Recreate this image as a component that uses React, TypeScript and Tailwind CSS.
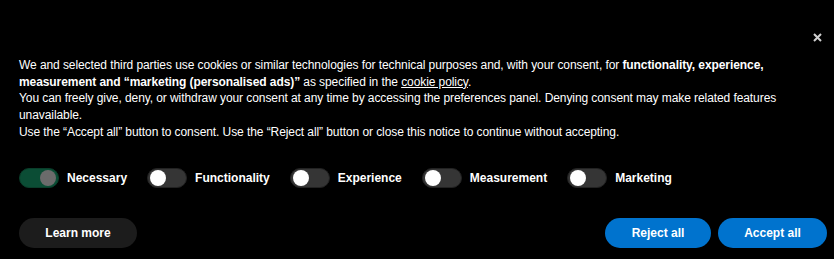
import React from 'react';

type Pref = { label: string; on?: boolean };

const prefs: Pref[] = [
  { label: 'Necessary', on: true },
  { label: 'Functionality' },
  { label: 'Experience' },
  { label: 'Measurement' },
  { label: 'Marketing' },
];

const Toggle = ({ on }: { on?: boolean }) => (
  <span
    className={`flex h-[20px] w-[40px] shrink-0 items-center rounded-full border px-[2px] ${
      on ? 'justify-end border-[#0a3d2a] bg-[#0b4d35]' : 'justify-start border-[#222] bg-[#353535]'
    }`}
  >
    <span className={`h-[16px] w-[16px] rounded-full ${on ? 'bg-[#6b6b6b]' : 'bg-white'}`} />
  </span>
);

export default function App() {
  return (
    <div
      className="relative h-[259px] w-full bg-black text-white"
      style={{ fontFamily: '"Liberation Sans", Arial, sans-serif' }}
    >
      <div className="flex justify-end pr-[12px] pt-[33px]">
        <button className="flex h-[9px] w-[9px] items-center justify-center" aria-label="Close">
          <svg width="9" height="9" viewBox="0 0 9 9">
            <path d="M1 1L8 8M8 1L1 8" stroke="#d0d0d0" strokeWidth="2" />
          </svg>
        </button>
      </div>

      <div className="pl-[19px] pr-[19px] pt-[15px]">
        <p className="text-[12px] leading-[16.7px] tracking-[-0.08px]">
          We and selected third parties use cookies or similar technologies for technical purposes and, with your
          consent, for <b>functionality, experience, measurement and “marketing (personalised ads)”</b> as specified
          in the <span className="underline">cookie policy</span>.
          <br />
          You can freely give, deny, or withdraw your consent at any time by accessing the preferences panel. Denying
          consent may make related features unavailable.
          <br />
          Use the “Accept all” button to consent. Use the “Reject all” button or close this notice to continue without
          accepting.
        </p>

        <div className="mt-[27px] flex items-center gap-[20px]">
          {prefs.map((p) => (
            <label key={p.label} className="flex items-center gap-[8px]">
              <Toggle on={p.on} />
              <span className="text-[12px] font-bold">{p.label}</span>
            </label>
          ))}
        </div>

        <div className="mr-[-12px] mt-[30px] flex items-center justify-between">
          <button className="h-[30px] w-[118px] rounded-full bg-[#1c1c1c] text-[12px] font-bold">Learn more</button>
          <div className="flex gap-[7px]">
            <button className="h-[30px] w-[106px] rounded-full bg-[#0073ce] text-[12px] font-bold">Reject all</button>
            <button className="h-[30px] w-[109px] rounded-full bg-[#0073ce] text-[12px] font-bold">Accept all</button>
          </div>
        </div>
      </div>
    </div>
  );
}
